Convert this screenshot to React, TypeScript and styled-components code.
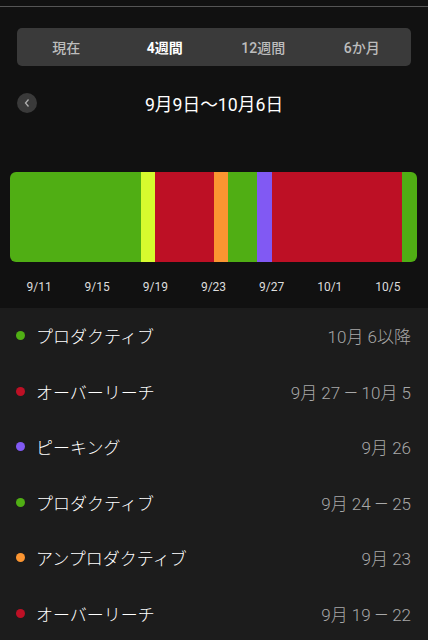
import React from 'react';
import styled, { createGlobalStyle } from 'styled-components';

const GlobalStyle = createGlobalStyle`
  html, body {
    margin: 0;
    padding: 0;
    background: #111111;
  }
  body {
    font-family: Roboto, "Noto Sans CJK JP", sans-serif;
  }
`

const Page = styled.div`
  width: 428px;
  height: 640px;
  overflow: hidden;
  background: #111111;
`
const TopLine = styled.div`
  margin-top: 6px;
  height: 1px;
  background: #555555;
`
const Tabs = styled.div`
  margin: 21px 17px 0 17px;
  height: 38px;
  border-radius: 5px;
  background: #3a3a3a;
  display: grid;
  grid-template-columns: repeat(4, 1fr);
  align-items: center;
`
const Tab = styled.div<{ $active?: boolean }>`
  text-align: center;
  font-size: 14px;
  font-weight: ${p => (p.$active ? 700 : 500)};
  color: ${p => (p.$active ? '#ffffff' : '#bdbdbd')};
`
const Header = styled.div`
  margin-top: 25px;
  height: 24px;
  display: flex;
  align-items: center;
  justify-content: center;
  position: relative;
`
const BackButton = styled.div`
  position: absolute;
  left: 17px;
  top: 2px;
  width: 20px;
  height: 20px;
  border-radius: 50%;
  background: #3a3a3a;
  display: flex;
  align-items: center;
  justify-content: center;
`
const Title = styled.div`
  font-size: 17.7px;
  color: #ffffff;
`
const Bar = styled.div`
  margin: 57px 11px 0 10px;
  height: 90px;
  border-radius: 6px;
  overflow: hidden;
  display: flex;
`
const Segment = styled.div<{ $color: string; $days: number }>`
  flex: ${p => p.$days} 0 0;
  background: ${p => p.$color};
`
const Labels = styled.div`
  margin: 15px 11px 0 10px;
  display: grid;
  grid-template-columns: repeat(7, 1fr);
  height: 20px;
  align-items: center;
`
const Label = styled.div`
  text-align: center;
  font-size: 12px;
  color: #dddddd;
`
const List = styled.div`
  margin-top: 11px;
  height: 333px;
  background: #1c1c1c;
`
const Row = styled.div`
  height: 55.5px;
  display: flex;
  align-items: center;
  padding: 0 17px 0 16px;
`
const Dot = styled.span<{ $color: string }>`
  width: 9px;
  height: 9px;
  border-radius: 50%;
  background: ${p => p.$color};
  margin-right: 11px;
  flex: none;
`
const Name = styled.div`
  font-size: 17px;
  font-weight: 300;
  color: #ffffff;
  flex: 1;
`
const Range = styled.div`
  font-size: 17px;
  font-weight: 300;
  color: #a8a8a8;
`

const GREEN = '#50ae14'
const YELLOW = '#d6fb2e'
const RED = '#bd1025'
const ORANGE = '#fb9531'
const PURPLE = '#8159f3'

const segments = [
  { color: GREEN, days: 9 },
  { color: YELLOW, days: 1 },
  { color: RED, days: 4 },
  { color: ORANGE, days: 1 },
  { color: GREEN, days: 2 },
  { color: PURPLE, days: 1 },
  { color: RED, days: 9 },
  { color: GREEN, days: 1 },
]

const labels = ['9/11', '9/15', '9/19', '9/23', '9/27', '10/1', '10/5']

const rows = [
  { color: GREEN, name: 'プロダクティブ', range: '10月 6以降' },
  { color: RED, name: 'オーバーリーチ', range: '9月 27 — 10月 5' },
  { color: PURPLE, name: 'ピーキング', range: '9月 26' },
  { color: GREEN, name: 'プロダクティブ', range: '9月 24 — 25' },
  { color: ORANGE, name: 'アンプロダクティブ', range: '9月 23' },
  { color: RED, name: 'オーバーリーチ', range: '9月 19 — 22' },
]

export default function App() {
  return (
    <Page>
      <GlobalStyle />
      <TopLine />
      <Tabs>
        <Tab>現在</Tab>
        <Tab $active>4週間</Tab>
        <Tab>12週間</Tab>
        <Tab>6か月</Tab>
      </Tabs>
      <Header>
        <BackButton>
          <svg width="8" height="10" viewBox="0 0 8 10">
            <path d="M5.5 1.5 L2.5 5 L5.5 8.5" stroke="#b0b0b0" strokeWidth="1.3" fill="none" />
          </svg>
        </BackButton>
        <Title>9月9日〜10月6日</Title>
      </Header>
      <Bar>
        {segments.map((s, i) => (
          <Segment key={i} $color={s.color} $days={s.days} />
        ))}
      </Bar>
      <Labels>
        {labels.map(l => (
          <Label key={l}>{l}</Label>
        ))}
      </Labels>
      <List>
        {rows.map((r, i) => (
          <Row key={i}>
            <Dot $color={r.color} />
            <Name>{r.name}</Name>
            <Range>{r.range}</Range>
          </Row>
        ))}
      </List>
    </Page>
  )
}
